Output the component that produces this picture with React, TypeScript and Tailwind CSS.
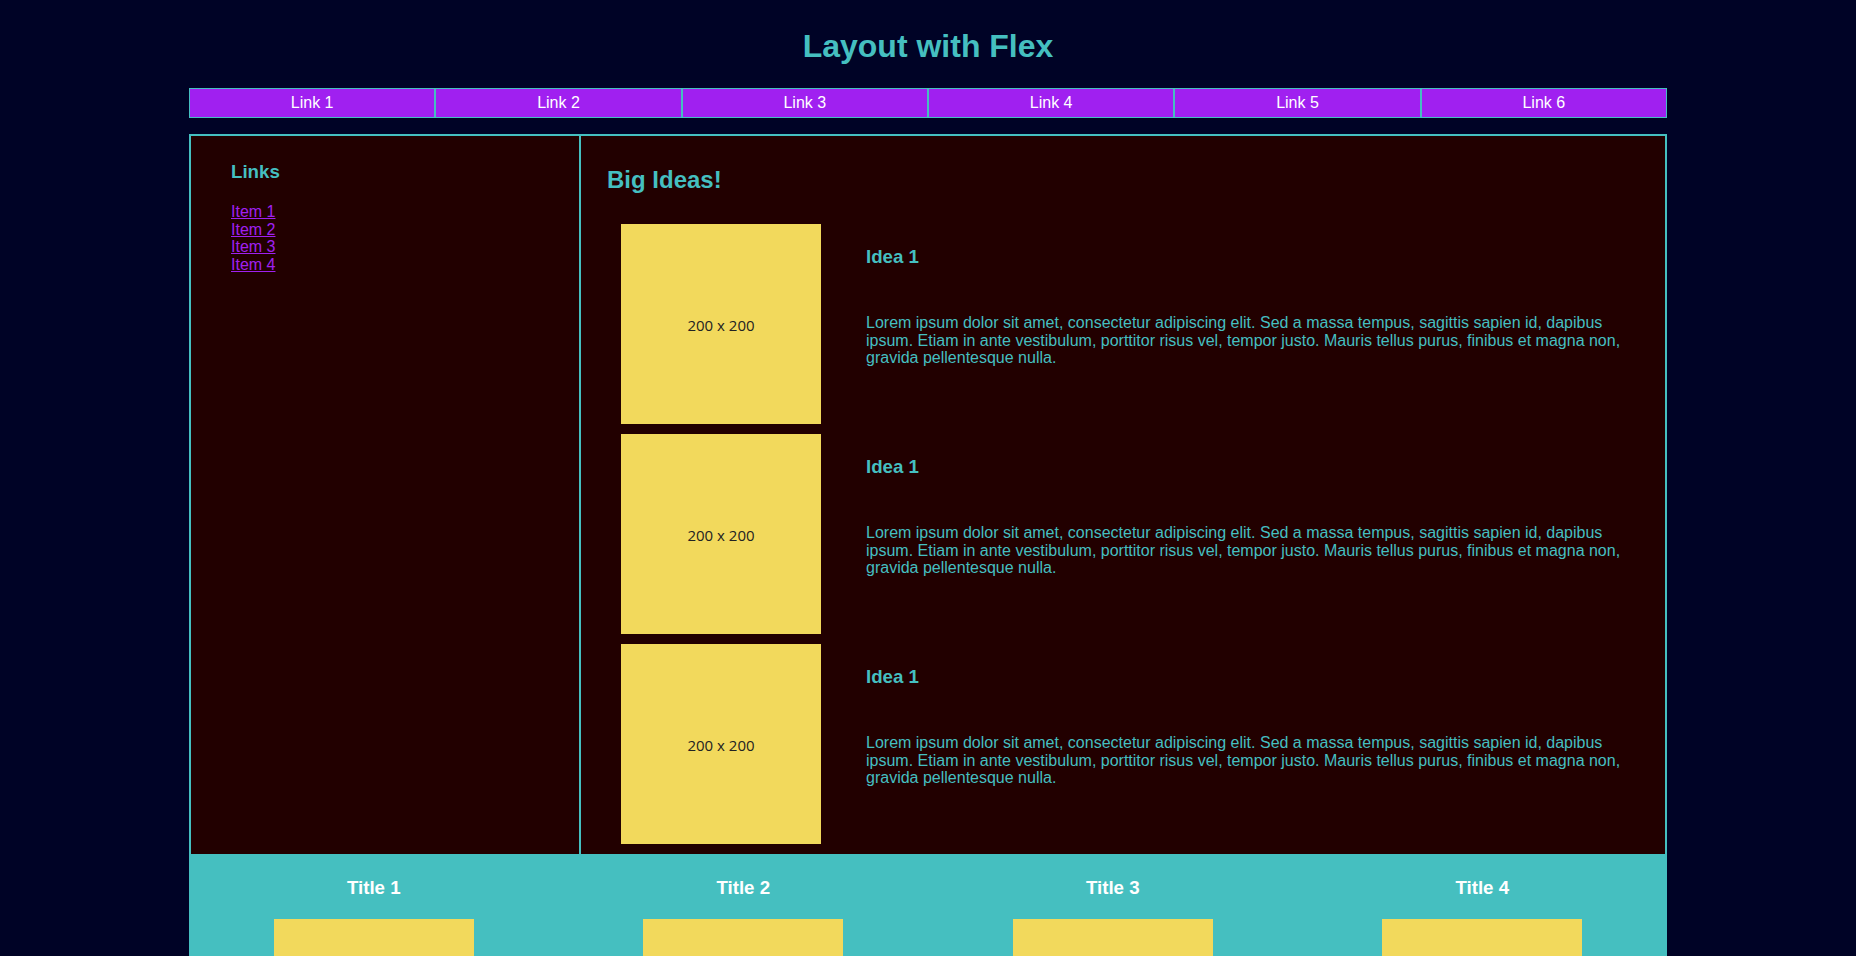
import React from 'react';

const navLinks = ['Link 1', 'Link 2', 'Link 3', 'Link 4', 'Link 5', 'Link 6'];
const sideItems = ['Item 1', 'Item 2', 'Item 3', 'Item 4'];
const footerTitles = ['Title 1', 'Title 2', 'Title 3', 'Title 4'];

const lorem =
  'Lorem ipsum dolor sit amet, consectetur adipiscing elit. Sed a massa tempus, sagittis sapien id, dapibus ipsum. Etiam in ante vestibulum, porttitor risus vel, tempor justo. Mauris tellus purus, finibus et magna non, gravida pellentesque nulla.';

const Placeholder: React.FC = () => (
  <div className="w-[200px] h-[200px] shrink-0 bg-[#f2d95c] flex items-center justify-center pt-[2px] text-[15px] text-[#222] [font-family:'Open_Sans',sans-serif]">
    200 x 200
  </div>
);

export default function App() {
  return (
    <div className="min-h-screen bg-[#000326] overflow-hidden [font-family:'Liberation_Sans',Arial,sans-serif]">
      <h1 className="pt-[28px] text-center text-[32px] leading-[37px] font-bold text-[#45bfc0]">Layout with Flex</h1>

      <nav className="mt-[23px] w-[1478px] mx-auto flex">
        {navLinks.map(link => (
          <a
            key={link}
            href="#"
            className="flex-1 border border-[#45bfc0] bg-[#a020f0] text-white text-center text-[16px] leading-[28px]"
          >
            {link}
          </a>
        ))}
      </nav>

      <main className="mt-[16px] w-[1478px] mx-auto flex border-2 border-[#45bfc0] bg-[#220000]">
        <aside className="w-[390px] shrink-0 border-r-2 border-[#45bfc0] pl-[40px] pt-[25px]">
          <h3 className="text-[18.72px] leading-[22px] font-bold text-[#45bfc0]">Links</h3>
          <ul className="mt-[20px]">
            {sideItems.map(item => (
              <li key={item} className="leading-[17.7px]">
                <a href="#" className="text-[16px] text-[#a020f0] underline">
                  {item}
                </a>
              </li>
            ))}
          </ul>
        </aside>

        <section className="flex-1 pt-[30px] pb-[10px]">
          <h2 className="pl-[26px] text-[24px] leading-[28px] font-bold text-[#45bfc0]">Big Ideas!</h2>
          <div className="mt-[30px] pl-[40px] pr-[40px] flex flex-col gap-[10px]">
            {[0, 1, 2].map(i => (
              <div key={i} className="flex">
                <Placeholder />
                <div className="ml-[45px] pt-[22px] text-[#45bfc0]">
                  <h3 className="text-[18.72px] leading-[22px] font-bold">Idea 1</h3>
                  <p className="mt-[46px] text-[16px] leading-[17.7px]">{lorem}</p>
                </div>
              </div>
            ))}
          </div>
        </section>
      </main>

      <footer className="w-[1478px] mx-auto grid grid-cols-4 bg-[#45bfc0] pb-[40px]">
        {footerTitles.map(title => (
          <div key={title} className="flex flex-col items-center pt-[21px]">
            <h3 className="text-[18.72px] leading-[22px] font-bold text-white">{title}</h3>
            <div className="mt-[20px]">
              <Placeholder />
            </div>
          </div>
        ))}
      </footer>
    </div>
  );
}
